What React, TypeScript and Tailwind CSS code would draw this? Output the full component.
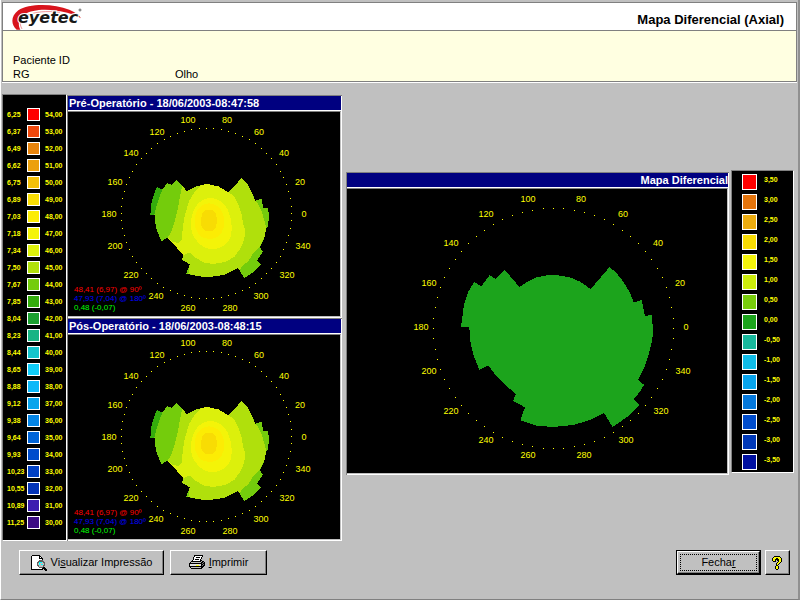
type Swatch = { color: string; left?: string; right: string };
type Label = { text: string; x: number; y: number };

const curvatureScale: Swatch[] = [
  { left: "6,25", color: "#ff0000", right: "54,00" },
  { left: "6,37", color: "#f0480c", right: "53,00" },
  { left: "6,49", color: "#e8840c", right: "52,00" },
  { left: "6,62", color: "#eca00c", right: "51,00" },
  { left: "6,75", color: "#f4c008", right: "50,00" },
  { left: "6,89", color: "#f8dc04", right: "49,00" },
  { left: "7,03", color: "#fcec04", right: "48,00" },
  { left: "7,18", color: "#f4f408", right: "47,00" },
  { left: "7,34", color: "#dcf00c", right: "46,00" },
  { left: "7,50", color: "#b0e00c", right: "45,00" },
  { left: "7,67", color: "#74cc0c", right: "44,00" },
  { left: "7,85", color: "#34ac0c", right: "43,00" },
  { left: "8,04", color: "#1ca030", right: "42,00" },
  { left: "8,23", color: "#18b484", right: "41,00" },
  { left: "8,44", color: "#14c4cc", right: "40,00" },
  { left: "8,65", color: "#10ccf8", right: "39,00" },
  { left: "8,88", color: "#0cb8f8", right: "38,00" },
  { left: "9,12", color: "#08a4ec", right: "37,00" },
  { left: "9,38", color: "#0484e4", right: "36,00" },
  { left: "9,64", color: "#0064d8", right: "35,00" },
  { left: "9,93", color: "#004ccc", right: "34,00" },
  { left: "10,23", color: "#0040c4", right: "33,00" },
  { left: "10,55", color: "#0434b8", right: "32,00" },
  { left: "10,89", color: "#3c1cb0", right: "31,00" },
  { left: "11,25", color: "#3c0c84", right: "30,00" },
];

const differenceScale: Swatch[] = [
  { color: "#ff0000", right: "3,50" },
  { color: "#e4740c", right: "3,00" },
  { color: "#ecac10", right: "2,50" },
  { color: "#f8dc04", right: "2,00" },
  { color: "#f4f40c", right: "1,50" },
  { color: "#ccec0c", right: "1,00" },
  { color: "#78cc0c", right: "0,50" },
  { color: "#1ca41c", right: "0,00" },
  { color: "#18b89c", right: "-0,50" },
  { color: "#10bce8", right: "-1,00" },
  { color: "#08a4ec", right: "-1,50" },
  { color: "#0478dc", right: "-2,00" },
  { color: "#004ccc", right: "-2,50" },
  { color: "#0038b8", right: "-3,00" },
  { color: "#0010a0", right: "-3,50" },
];

const smallLabels: Label[] = [
  { text: "0", x: 236, y: 102 },
  { text: "20", x: 232, y: 70 },
  { text: "40", x: 216, y: 41 },
  { text: "60", x: 191, y: 20 },
  { text: "80", x: 159, y: 8 },
  { text: "100", x: 120, y: 8 },
  { text: "120", x: 89, y: 20 },
  { text: "140", x: 63, y: 41 },
  { text: "160", x: 47, y: 70 },
  { text: "180", x: 41, y: 102 },
  { text: "200", x: 47, y: 134 },
  { text: "220", x: 63, y: 163 },
  { text: "240", x: 88, y: 184 },
  { text: "260", x: 120, y: 196 },
  { text: "280", x: 162, y: 196 },
  { text: "300", x: 193, y: 184 },
  { text: "320", x: 219, y: 163 },
  { text: "340", x: 235, y: 134 },
];

const largeLabels: Label[] = [
  { text: "0", x: 338, y: 138 },
  { text: "20", x: 332, y: 94 },
  { text: "40", x: 310, y: 54 },
  { text: "60", x: 275, y: 25 },
  { text: "80", x: 233, y: 10 },
  { text: "100", x: 180, y: 10 },
  { text: "120", x: 138, y: 25 },
  { text: "140", x: 103, y: 54 },
  { text: "160", x: 81, y: 94 },
  { text: "180", x: 73, y: 138 },
  { text: "200", x: 81, y: 182 },
  { text: "220", x: 103, y: 222 },
  { text: "240", x: 138, y: 251 },
  { text: "260", x: 180, y: 266 },
  { text: "280", x: 236, y: 266 },
  { text: "300", x: 278, y: 251 },
  { text: "320", x: 313, y: 222 },
  { text: "340", x: 335, y: 182 },
];

function Ring({ cx, cy, r, labels }: { cx: number; cy: number; r: number; labels: Label[] }) {
  // one dot every 5 degrees
  const dots = Array.from({ length: 72 }, (_, i) => {
    const a = (i * 5 * Math.PI) / 180;
    return { x: Math.round(cx + r * Math.cos(a)), y: Math.round(cy - r * Math.sin(a)) };
  });
  return (
    <g fill="#ffff00">
      {dots.map((d, i) => (
        <rect key={i} x={d.x} y={d.y} width="1" height="1" />
      ))}
      {labels.map((l) => (
        <text key={l.text} x={l.x} y={l.y + 3} textAnchor="middle" fontSize="9">
          {l.text}
        </text>
      ))}
    </g>
  );
}

function AxialMap() {
  return (
    <svg viewBox="0 0 272 204" className="mx-auto block h-[204px]" shapeRendering="crispEdges">
      <g transform="scale(0.333333) translate(-9 -57)">
        <path
          fill="#74cc0c"
          d="M276 282L268 300L260 325L256 365H269L270 385L276 415L290 444L308 434L355 486L351 500L374 514L364 542L400 550L435 552L480 545L519 525L538 555L565 537L587 515L576 503L594 475L584 463L598 435L604 405L609 400L612 370L609 346H595L590 317L571 323L558 292L545 270L530 255L491 298L460 280L427 273L395 280L365 294L335 262L320 276L307 270L292 290Z"
        />
        <path fill="#34ac0c" d="M276 282L292 290L282 315L276 335L268 365H256L260 325L268 300Z" />
        <path
          fill="#b0e00c"
          d="M352 278L365 294L395 280L427 273L460 280L491 298L530 255L545 270L558 292L570 322L582 337L590 355L597 380L604 405L598 435L580 467L565 480L550 505L530 520L525 533L519 525L480 545L435 552L400 550L370 543L374 514L351 500L355 486L308 434L318 418L328 390L338 350L344 315Z"
        />
        <path
          fill="#dcf00c"
          d="M410 276L427 273L460 280L491 298L507 310L520 335L530 365L535 395L540 408L538 440L525 468L508 492L480 507L445 513L415 508L390 493L375 478L355 486L308 434L320 445L340 451L350 440L354 400L360 365L372 325L388 298Z"
        />
        <path
          fill="#f4f408"
          d="M431 315C455 314 478 326 488 350C500 375 503 405 498 428C492 452 468 469 440 469C412 468 394 445 383 425C376 408 376 382 383 360C391 335 408 318 431 315Z"
        />
        <path
          fill="#fcec04"
          d="M430 331C452 330 468 345 475 365C481 390 477 415 462 429C446 441 420 441 405 428C391 414 386 392 390 370C396 347 410 333 430 331Z"
        />
        <path
          fill="#f8dc04"
          d="M424 350H442L452 362L457 380L453 402L442 414H422L411 404L407 386L411 362Z"
        />
      </g>
      <Ring cx={138} cy={101} r={85} labels={smallLabels} />
    </svg>
  );
}

function DifferenceMap() {
  return (
    <svg viewBox="0 0 379 284" className="mx-auto block h-[284px]" shapeRendering="crispEdges">
      <path
        fill="#1ca41c"
        transform="scale(0.333333) translate(-24 -72)"
        d="M402 351L424 364L449 330L467 342L495 315L538 366L562 350L590 337L620 331H655L690 337L720 350L752 372L809 306L830 325L850 350L868 380L882 413L905 405L910 430L915 453L935 450L939 490L937 525L927 565L912 610L894 645L912 659L900 680L882 702L897 720L870 750L818 786L792 744L750 765L700 780L640 786L590 782L541 766L555 727L519 708L528 687L490 655L465 628L445 601L418 615L400 570L390 525L388 485H363L372 420L385 380Z"
      />
      <Ring cx={205} cy={139} r={120} labels={largeLabels} />
    </svg>
  );
}

type MapPanelProps = {
  title: string;
  alignRight?: boolean;
  readings?: string[];
  children: React.ReactNode;
};

function MapPanel({ title, alignRight, readings, children }: MapPanelProps) {
  return (
    <section className="border-t border-l border-[#808080]">
      <h2
        className={`h-[15px] overflow-hidden border-r border-b border-white bg-[#000080] pl-px text-[11px] leading-[14px] font-bold whitespace-nowrap text-white ${
          alignRight ? "text-right" : "text-left"
        }`}
      >
        {title}
      </h2>
      <div className="border-r border-b border-white">
        <div className="relative border-t border-r border-b border-t-[#808080] border-r-[#c0c0c0] border-b-[#c0c0c0] bg-black">
          {children}
          {readings && (
            <div className="absolute bottom-1 left-1.5 text-[8px] leading-[9px]">
              <p className="text-[#ff0000]">{readings[0]}</p>
              <p className="text-[#0000ff]">{readings[1]}</p>
              <p className="text-[#00ff00]">{readings[2]}</p>
            </div>
          )}
        </div>
      </div>
    </section>
  );
}

function Logo() {
  return (
    <svg viewBox="0 0 74 26" className="h-[26px] w-[74px]" role="img" aria-label="eyetec">
      <g transform="scale(0.333333) translate(-36 -9)">
        <path
          fill="#d8141c"
          d="M50 86C32 70 32 45 55 28C86 7 160 7 208 26C226 34 238 42 243 52C226 41 200 33 170 29C130 23 94 27 74 40C56 51 52 68 61 86Z"
        />
        <path
          fill="none"
          stroke="#e86068"
          strokeWidth="2"
          d="M66 84C56 66 61 53 79 44C104 32 140 29 180 34"
        />
      </g>
      <text
        x="6"
        y="19"
        fontFamily="DejaVu Sans"
        fontSize="16"
        fontWeight="bold"
        fontStyle="italic"
        fill="#181818"
        stroke="#ffffff"
        strokeWidth="2"
        paintOrder="stroke"
      >
        eyetec
      </text>
      <circle cx="68" cy="6" r="1" fill="none" stroke="#666666" strokeWidth="1" />
    </svg>
  );
}

function PreviewIcon() {
  return (
    <svg viewBox="0 0 16 16" className="h-4 w-4 shrink-0" shapeRendering="crispEdges">
      <path d="M1.5 0.5H8.5L11.5 3.5V14.5H0.5V1.5Z" fill="#ffffff" stroke="#000000" />
      <path d="M8.5 0.5V3.5H11.5" fill="none" stroke="#000000" />
      <path d="M8 5H12V6H13V7H14V11H13V12H12V13H8V12H7V11H6V7H7V6H8Z" fill="#606060" />
      <path d="M8 7H12V8H13V10H12V12H8V10H7V8H8Z" fill="#c0c0c0" />
      <path d="M8 7H11V8H9V10H8ZM10 9H12V10H10Z" fill="#00ffff" />
      <path d="M12 12H14V13H15V14H16V16H14V15H13V14H12Z" fill="#000000" />
    </svg>
  );
}

function PrinterIcon() {
  return (
    <svg viewBox="0 0 16 15" className="h-[15px] w-4 shrink-0" shapeRendering="crispEdges">
      {/* body */}
      <path d="M3 5H13V6H15V7H16V11H15V12H14V13H13V14H2V13H1V12H0V8H1V7H2V6H3Z" fill="#000000" />
      <path d="M3 6H13V7H12V8H2V7H3Z" fill="#c0c0c0" />
      <path d="M1 9H12V11H1Z" fill="#e0e0e0" />
      <path d="M2 12H12V13H2Z" fill="#c0c0c0" />
      <path d="M13 8H14V7H15V8H14V9H13ZM13 10H14V9H15V10H14V11H13Z" fill="#808080" />
      <path d="M7 10H10V11H7Z" fill="#ffff00" />
      {/* paper */}
      <path d="M5 0H14V2H13V4H12V7H3V5H4V2H5Z" fill="#000000" />
      <path d="M6 1H13V2H12V4H11V6H4V5H5V2H6Z" fill="#ffffff" />
      <path d="M7 2H11V3H7ZM6 4H10V5H6Z" fill="#000000" />
    </svg>
  );
}

function HelpIcon() {
  return (
    <svg viewBox="0 0 11 14" className="h-[14px] w-[11px]" shapeRendering="crispEdges">
      <path
        d="M2 0H8V1H9V2H10V6H9V7H8V8H7V9H6V10H7V13H6V14H4V13H3V10H4V7H5V6H6V5H5V4H4V6H1V5H0V2H1V1H2Z"
        fill="#000000"
      />
      <path d="M2 1H8V2H9V6H8V7H7V8H6V9H5V7H6V6H7V3H6V2H4V3H3V5H1V2H2ZM4 10H6V13H4Z" fill="#ffff00" />
    </svg>
  );
}

const buttonFace =
  "flex items-center justify-center border-t border-l border-r border-b border-t-white border-l-white border-r-black border-b-black bg-[#c0c0c0] shadow-[inset_-1px_-1px_0_#808080]";

export default function App() {
  return (
    <main className="flex min-h-screen flex-col border-r-2 border-b border-l border-r-[#909090] border-b-[#808080] border-l-white bg-[#c0c0c0] pt-0.5 font-['Liberation_Sans',Arial,sans-serif] text-[11px] text-black">
      <header className="mx-px border border-[#808080] shadow-[0_1px_0_#ffffff]">
        <div className="flex h-7 items-center justify-between border-b border-[#808080] bg-white pr-3 pl-[9px]">
          <Logo />
          <h1 className="pt-1.5 text-[13px] font-bold">Mapa Diferencial (Axial)</h1>
        </div>
        <div className="flex h-[50px] items-end bg-[#ffffe1] pl-2.5 leading-[14px]">
          <div className="w-[162px]">
            <p>Paciente ID</p>
            <p>RG</p>
          </div>
          <p>Olho</p>
        </div>
      </header>

      <div className="mt-3 flex items-start pr-1 pl-px">
        <ul className="h-[447px] w-[65px] shrink-0 border border-t-[#808080] border-r-white border-b-white border-l-[#808080] bg-black pt-[11px] pl-1 text-[7px] font-bold text-[#ffff00]">
          {curvatureScale.map((s) => (
            <li key={s.right} className="flex h-[17px] items-center leading-[9px]">
              <span className="w-5">{s.left}</span>
              <span className="h-[13px] w-[13px] border border-white" style={{ backgroundColor: s.color }} />
              <span className="ml-[5px]">{s.right}</span>
            </li>
          ))}
        </ul>

        <div className="mt-px w-[275px] shrink-0">
          <MapPanel
            title="Pré-Operatório - 18/06/2003-08:47:58"
            readings={["48,41 (6,97) @ 90º", "47,93 (7,04) @ 180º", "0,48 (-0,07)"]}
          >
            <AxialMap />
          </MapPanel>
          <MapPanel
            title="Pós-Operatório - 18/06/2003-08:48:15"
            readings={["48,41 (6,97) @ 90º", "47,93 (7,04) @ 180º", "0,48 (-0,07)"]}
          >
            <AxialMap />
          </MapPanel>
        </div>

        <div className="mt-[78px] ml-1 min-w-0 flex-1">
          <MapPanel title="Mapa Diferencial" alignRight>
            <DifferenceMap />
          </MapPanel>
        </div>

        <ul className="mt-[76px] ml-0.5 w-[63px] shrink-0 border border-t-[#808080] border-r-white border-b-white border-l-[#808080] bg-black pt-px pl-2.5 text-[7px] font-bold text-[#ffff00]">
          {differenceScale.map((s) => (
            <li key={s.right} className="flex h-5 items-start pt-0.5 leading-[11px]">
              <span className="h-4 w-[15px] border border-white" style={{ backgroundColor: s.color }} />
              <span className="ml-[7px]">{s.right}</span>
            </li>
          ))}
        </ul>
      </div>

      <footer className="mt-[9px] flex items-stretch pr-2 pl-[18px]">
        <button type="button" className={`${buttonFace} h-[25px] w-[145px] gap-1`}>
          <PreviewIcon />
          <span>
            Vi<u>s</u>ualizar Impressão
          </span>
        </button>
        <button type="button" className={`${buttonFace} ml-1.5 h-[25px] w-[97px] gap-1`}>
          <PrinterIcon />
          <span>
            <u>I</u>mprimir
          </span>
        </button>
        <div className="ml-auto h-[25px] w-[85px] border border-black">
          <button type="button" className={`${buttonFace} h-full w-full p-0.5`}>
            <span className="flex h-full w-full items-center justify-center border border-dotted border-black">
              <span>
                Fecha<u>r</u>
              </span>
            </span>
          </button>
        </div>
        <button type="button" aria-label="Ajuda" className={`${buttonFace} ml-1 h-[25px] w-[25px]`}>
          <HelpIcon />
        </button>
      </footer>
    </main>
  );
}
